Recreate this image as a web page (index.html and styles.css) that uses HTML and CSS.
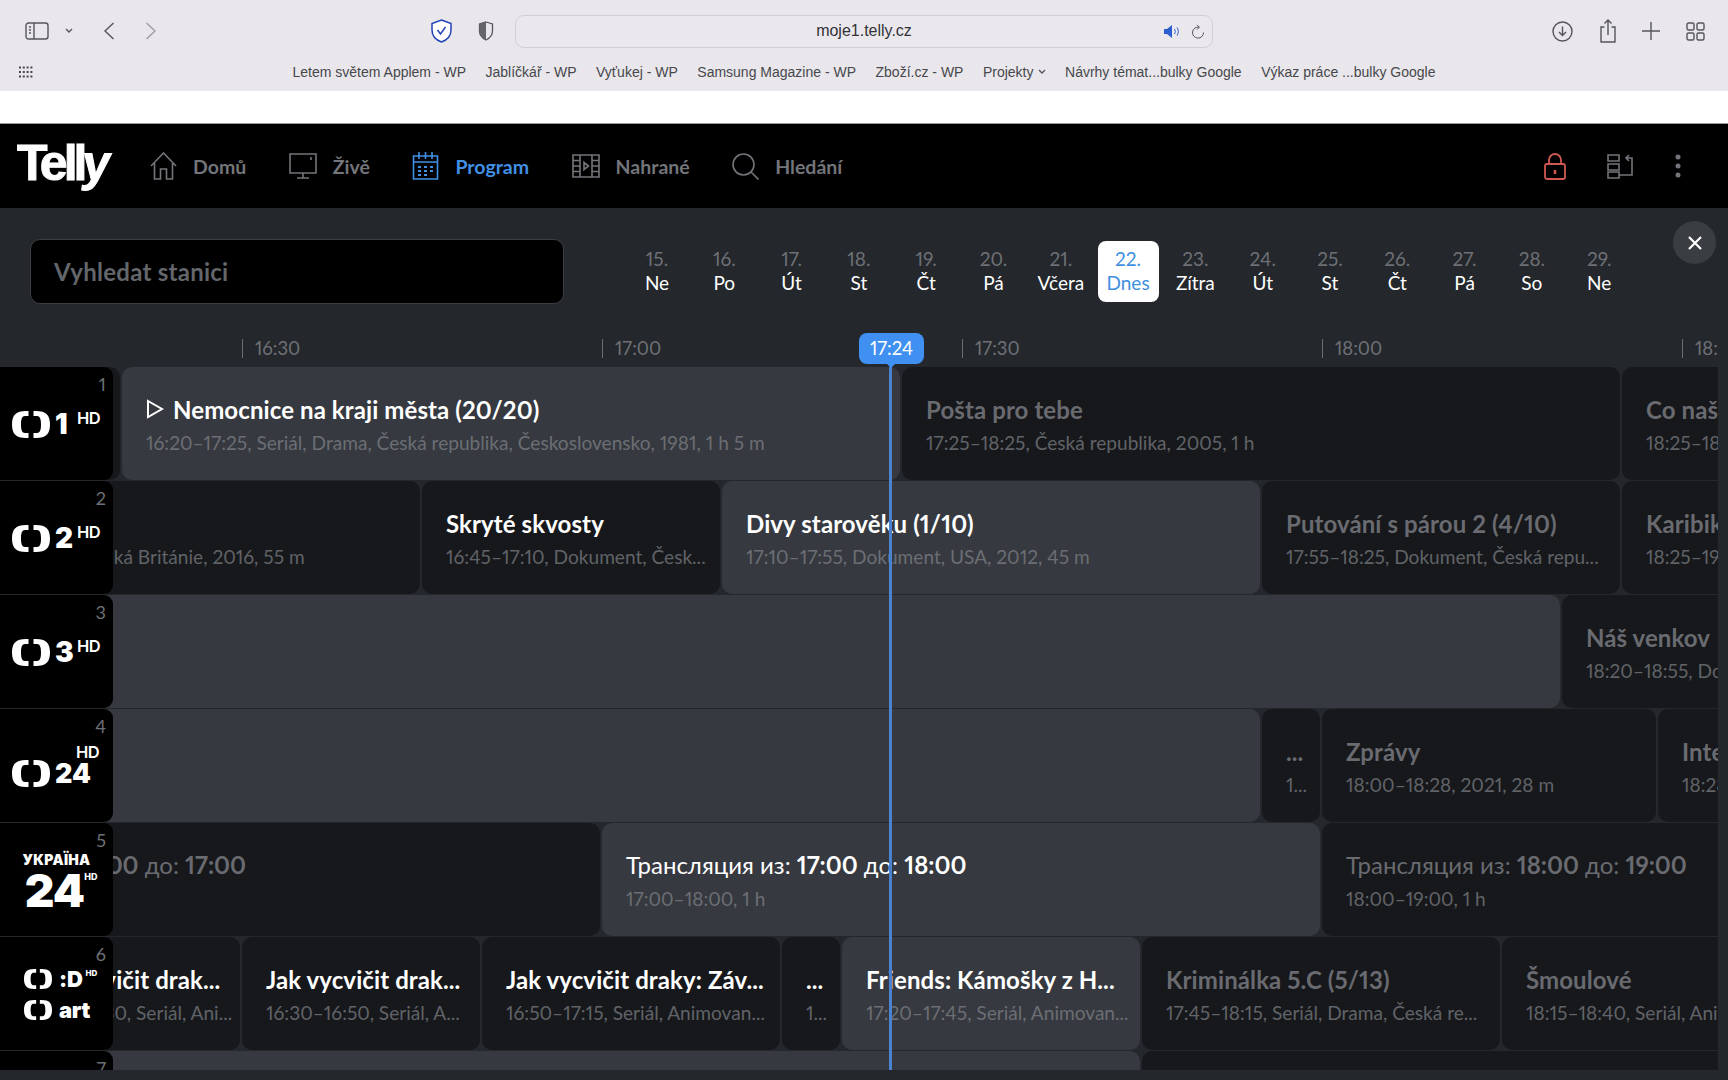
FILE: index.html
```html
<!DOCTYPE html>
<html lang="cs">
<head>
<meta charset="utf-8">
<title>Telly</title>
<link rel="stylesheet" href="styles.css">
</head>
<body>
<svg class="defs" aria-hidden="true">
  <symbol id="ct" viewBox="0 0 38 27">
    <path d="M14 0C4 0 0 4 0 13.500S4 27 14 27h2.500v-5H13c-3 0-4-3-4-8.500S10 5 13 5h3.500V0zM24 0c10 0 14 4 14 13.500S34 27 24 27h-2.500v-5H25c3 0 4-3 4-8.500S28 5 25 5h-3.500V0z" fill="#fff"/>
  </symbol>
</svg>

<header class="browser">
  <div class="browser-top">
    <div class="browser-left">
      <svg class="ic" width="24" height="18" viewBox="0 0 24 18"><rect x="1" y="1" width="22" height="16" rx="2.500"/><path d="M9 1v16M4 5h2M4 8h2M4 11h2"/></svg>
      <svg class="ic chev" width="8" height="6" viewBox="0 0 8 6"><path d="M1 1l3 3 3-3"/></svg>
      <svg class="ic back" width="12" height="18" viewBox="0 0 12 18"><path d="M10.500 1L2 9l8.500 8"/></svg>
      <svg class="ic fwd" width="12" height="18" viewBox="0 0 12 18"><path d="M1.500 1L10 9l-8.500 8"/></svg>
      <span class="grow"></span>
      <svg class="ic-blue" width="23" height="24" viewBox="0 0 23 24"><path d="M11.500 1l9.500 3.500v6.500c0 6-4 10-9.500 12C6 21 2 17 2 11V4.500z" fill="#fff"/><path d="M7.500 11l3 4 5-7" fill="none"/></svg>
      <svg class="half" width="16" height="20" viewBox="0 0 16 20"><path d="M8 1l6.500 2v7c0 4-2.500 7-6.500 9-4-2-6.500-5-6.500-9V3z" fill="none" stroke="#55555a" stroke-width="1.300"/><path d="M8 1L1.500 3v7c0 4 2.500 7 6.500 9z" fill="#65656a"/></svg>
    </div>
    <div class="address">
      <span class="url">moje1.telly.cz</span>
      <svg class="sound" width="17" height="13" viewBox="0 0 17 13"><path d="M0 4h3l5-4v13l-5-4H0z" fill="#2b5fd0"/><path d="M10.500 4c1 1.500 1 3.500 0 5M13 2.500c1.800 2.500 1.800 5.500 0 8" fill="none" stroke="#2b5fd0" stroke-width="1"/></svg>
      <svg class="ic reload" width="14" height="15" viewBox="0 0 14 15"><path d="M8 3.200A5.500 5.500 0 1 0 12.500 8.500M6 .8l2.400 2.400L6 5.600" stroke-width="1"/></svg>
    </div>
    <div class="browser-right">
      <svg class="ic" width="21" height="21" viewBox="0 0 21 21"><circle cx="10.500" cy="10.500" r="9.500"/><path d="M10.500 5.500v9M7 11l3.500 3.500L14 11"/></svg>
      <svg class="ic" width="18" height="24" viewBox="0 0 18 24"><path d="M5.500 8H2v15h14V8h-3.500M9 16V1M5.500 4.500L9 1l3.500 3.500"/></svg>
      <svg class="ic" width="18" height="18" viewBox="0 0 18 18"><path d="M9 0v18M0 9h18"/></svg>
      <svg class="ic" width="19" height="19" viewBox="0 0 19 19"><rect x="1" y="1" width="7" height="7" rx="1.500"/><rect x="11" y="1" width="7" height="7" rx="1.500"/><rect x="1" y="11" width="7" height="7" rx="1.500"/><rect x="11" y="11" width="7" height="7" rx="1.500"/></svg>
    </div>
  </div>
  <div class="browser-bookmarks">
    <svg class="apps" width="16" height="12" viewBox="0 0 16 12"><path d="M1 1.500h14M1 6h14M1 10.500h14" stroke="#46464a" stroke-width="2" stroke-dasharray="2 1.800" fill="none"/></svg>
    <nav class="bookmarks">
      <span>Letem světem Applem - WP</span>
      <span>Jablíčkář - WP</span>
      <span>Vyťukej - WP</span>
      <span>Samsung Magazine - WP</span>
      <span>Zboží.cz - WP</span>
      <span class="folder">Projekty <svg class="ic" width="8" height="6" viewBox="0 0 8 6"><path d="M1 1l3 3 3-3"/></svg></span>
      <span>Návrhy témat...bulky Google</span>
      <span>Výkaz práce ...bulky Google</span>
    </nav>
  </div>
</header>
<div class="page-gap"></div>

<nav class="topnav">
  <div class="logo">Tell<span class="logo-y">y</span></div>
  <a class="nav-item">
    <svg class="nav-ic" width="27" height="28" viewBox="0 0 27 28"><path d="M1 14L13.500 1 26 14M4.500 11v16H10.500V17h6v10h6V11"/></svg>
    <span>Domů</span>
  </a>
  <a class="nav-item">
    <svg class="nav-ic" width="28" height="26" viewBox="0 0 28 26"><path d="M1 1h26v19H1zM14 20v5M8 25h12M22 4v3"/></svg>
    <span>Živě</span>
  </a>
  <a class="nav-item nav-item--active">
    <svg class="nav-ic" width="27" height="28" viewBox="0 0 27 28"><path d="M1.500 4h24v23h-24zM1.500 10h24M7 0v7M13.500 0v7M20 0v7"/><path class="nav-dots" d="M6 15h3M12 15h3M18 15h3M6 19h3M12 19h3M18 19h3M6 23h3M12 23h3"/></svg>
    <span>Program</span>
  </a>
  <a class="nav-item">
    <svg class="nav-ic" width="28" height="24" viewBox="0 0 28 24"><path d="M1 1h26v22H1zM8 1v22M20 1v22M1 6.500h7M1 12h7M1 17.500h7M20 6.500h7M20 12h7M20 17.500h7M12 8.500l4.500 3.500-4.500 3.500z"/></svg>
    <span>Nahrané</span>
  </a>
  <a class="nav-item">
    <svg class="nav-ic" width="27" height="27" viewBox="0 0 27 27"><circle cx="11.500" cy="11.500" r="10.500"/><path d="M19 19l7.500 7.500"/></svg>
    <span>Hledání</span>
  </a>
  <span class="grow"></span>
  <svg class="nav-lock" width="22" height="27" viewBox="0 0 22 27"><path d="M5 11V7a6 6 0 0 1 12 0v4M3 11h16a2 2 0 0 1 2 2v11a2 2 0 0 1-2 2H3a2 2 0 0 1-2-2V13a2 2 0 0 1 2-2z"/><path d="M11 17v4" stroke-width="2.500"/></svg>
  <svg class="nav-ic nav-devices" width="27" height="25" viewBox="0 0 27 25"><path d="M1 1h11v6H1zM1 10h11v6H1zM1 18h11v6H1zM12 21h13V4h-5M22 1l-3 3 3 3"/></svg>
  <svg class="nav-more" width="6" height="24" viewBox="0 0 6 24"><circle cx="3" cy="3" r="2.500"/><circle cx="3" cy="12" r="2.500"/><circle cx="3" cy="21" r="2.500"/></svg>
</nav>

<main class="epg">
  <section class="filters">
    <div class="search">Vyhledat stanici</div>
    <div class="dates">
      <div class="date"><b>15.</b><span>Ne</span></div>
      <div class="date"><b>16.</b><span>Po</span></div>
      <div class="date"><b>17.</b><span>Út</span></div>
      <div class="date"><b>18.</b><span>St</span></div>
      <div class="date"><b>19.</b><span>Čt</span></div>
      <div class="date"><b>20.</b><span>Pá</span></div>
      <div class="date"><b>21.</b><span>Včera</span></div>
      <div class="date date--active"><b>22.</b><span>Dnes</span></div>
      <div class="date"><b>23.</b><span>Zítra</span></div>
      <div class="date"><b>24.</b><span>Út</span></div>
      <div class="date"><b>25.</b><span>St</span></div>
      <div class="date"><b>26.</b><span>Čt</span></div>
      <div class="date"><b>27.</b><span>Pá</span></div>
      <div class="date"><b>28.</b><span>So</span></div>
      <div class="date"><b>29.</b><span>Ne</span></div>
    </div>
    <button class="close" aria-label="Zavřít"><svg width="16" height="16" viewBox="0 0 16 16"><path d="M2 2l12 12M14 2L2 14"/></svg></button>
  </section>

  <section class="guide">
    <div class="ruler">
      <span class="tick">16:30</span>
      <span class="tick">17:00</span>
      <span class="tick">17:30</span>
      <span class="tick">18:00</span>
      <span class="tick">18:30</span>
    </div>
    <div class="now-badge">17:24</div>
    <div class="now-line"></div>

    <div class="grid">
      <div class="channels">
        <div class="channel"><i>1</i><div class="ch-logo"><svg class="ct"><use href="#ct"/></svg><b class="ch-num">1</b><small class="ch-hd">HD</small></div></div>
        <div class="channel"><i>2</i><div class="ch-logo"><svg class="ct"><use href="#ct"/></svg><b class="ch-num">2</b><small class="ch-hd">HD</small></div></div>
        <div class="channel"><i>3</i><div class="ch-logo"><svg class="ct"><use href="#ct"/></svg><b class="ch-num">3</b><small class="ch-hd">HD</small></div></div>
        <div class="channel"><i>4</i><div class="ch-logo ch-logo--24"><svg class="ct"><use href="#ct"/></svg><b class="ch-num">24</b><small class="ch-hd">HD</small></div></div>
        <div class="channel"><i>5</i><div class="ch-ua"><span class="ua-name">УКРАЇНА</span><span class="ua-num">24<small>HD</small></span></div></div>
        <div class="channel"><i>6</i><div class="ch-stack">
          <div class="ch-line"><svg class="ct ct--small"><use href="#ct"/></svg><b>:D</b><small>HD</small></div>
          <div class="ch-line"><svg class="ct ct--small"><use href="#ct"/></svg><b>art</b></div>
        </div></div>
        <div class="channel"><i>7</i></div>
      </div>

      <div class="rows">
        <div class="row">
          <div class="prog" style="width:718px"></div>
          <div class="prog prog--live" style="width:778px"><div class="prog-title"><svg class="play" width="18" height="20" viewBox="0 0 18 20"><path d="M2 2l14 8-14 8z"/></svg>Nemocnice na kraji města (20/20)</div><div class="prog-meta">16:20–17:25, Seriál, Drama, Česká republika, Československo, 1981, 1 h 5 m</div></div>
          <div class="prog" style="width:718px"><div class="prog-title">Pošta pro tebe</div><div class="prog-meta">17:25–18:25, Česká republika, 2005, 1 h</div></div>
          <div class="prog" style="width:538px"><div class="prog-title">Co naše babička</div><div class="prog-meta">18:25–18:55, Dokument, 30 m</div></div>
        </div>
        <div class="row">
          <div class="prog" style="width:358px"></div>
          <div class="prog" style="width:658px"><div class="prog-title">&nbsp;</div><div class="prog-meta">15:50–16:45, Dokument, Historický, Velká Británie, 2016, 55 m</div></div>
          <div class="prog prog--past" style="width:298px"><div class="prog-title">Skryté skvosty</div><div class="prog-meta">16:45–17:10, Dokument, Česk...</div></div>
          <div class="prog prog--live" style="width:538px"><div class="prog-title">Divy starověku (1/10)</div><div class="prog-meta">17:10–17:55, Dokument, USA, 2012, 45 m</div></div>
          <div class="prog" style="width:358px"><div class="prog-title">Putování s párou 2 (4/10)</div><div class="prog-meta">17:55–18:25, Dokument, Česká repu...</div></div>
          <div class="prog" style="width:418px"><div class="prog-title">Karibik</div><div class="prog-meta">18:25–19:00, Dokument</div></div>
        </div>
        <div class="row">
          <div class="prog prog--live" style="width:2158px"></div>
          <div class="prog" style="width:418px"><div class="prog-title">Náš venkov</div><div class="prog-meta">18:20–18:55, Dokument, Česko</div></div>
        </div>
        <div class="row">
          <div class="prog prog--live" style="width:1858px"></div>
          <div class="prog" style="width:58px"><div class="prog-title">...</div><div class="prog-meta">1...</div></div>
          <div class="prog" style="width:334px"><div class="prog-title">Zprávy</div><div class="prog-meta">18:00–18:28, 2021, 28 m</div></div>
          <div class="prog" style="width:418px"><div class="prog-title">Interview</div><div class="prog-meta">18:28–19:00, 2021</div></div>
        </div>
        <div class="row">
          <div class="prog" style="width:478px"></div>
          <div class="prog" style="width:718px"><div class="prog-title prog-title--plain">Трансляция из: <b>16:00</b> до: <b>17:00</b></div><div class="prog-meta">&nbsp;</div></div>
          <div class="prog prog--live" style="width:718px"><div class="prog-title prog-title--plain">Трансляция из: <b>17:00</b> до: <b>18:00</b></div><div class="prog-meta">17:00–18:00, 1 h</div></div>
          <div class="prog" style="width:718px"><div class="prog-title prog-title--plain">Трансляция из: <b>18:00</b> до: <b>19:00</b></div><div class="prog-meta">18:00–19:00, 1 h</div></div>
        </div>
        <div class="row">
          <div class="prog" style="width:598px"></div>
          <div class="prog prog--past" style="width:238px"><div class="prog-title">Jak vycvičit drak...</div><div class="prog-meta">16:10–16:30, Seriál, Ani...</div></div>
          <div class="prog prog--past" style="width:238px"><div class="prog-title">Jak vycvičit drak...</div><div class="prog-meta">16:30–16:50, Seriál, A...</div></div>
          <div class="prog prog--past" style="width:298px"><div class="prog-title">Jak vycvičit draky: Záv...</div><div class="prog-meta">16:50–17:15, Seriál, Animovan...</div></div>
          <div class="prog prog--past" style="width:58px"><div class="prog-title">...</div><div class="prog-meta">1...</div></div>
          <div class="prog prog--live" style="width:298px"><div class="prog-title">Friends: Kámošky z H...</div><div class="prog-meta">17:20–17:45, Seriál, Animovan...</div></div>
          <div class="prog" style="width:358px"><div class="prog-title">Kriminálka 5.C (5/13)</div><div class="prog-meta">17:45–18:15, Seriál, Drama, Česká re...</div></div>
          <div class="prog" style="width:298px"><div class="prog-title">Šmoulové</div><div class="prog-meta">18:15–18:40, Seriál, Animovaný</div></div>
        </div>
        <div class="row">
          <div class="prog prog--live" style="width:1738px"></div>
          <div class="prog" style="width:718px"></div>
        </div>
      </div>
    </div>
  </section>
</main>
</body>
</html>
```

FILE: styles.css
```css
* { box-sizing: border-box; }
html, body { margin: 0; height: 1080px; overflow: hidden; }
body { background: #24272c; font-family: "Lato", "Noto Sans", sans-serif; font-variant-numeric: proportional-nums; color: #fff; }
.defs { display: none; }
.grow { flex: 1; }

/* browser chrome */
.browser { height: 91px; background: #e9e7ec; font-family: "Liberation Sans", sans-serif; color: #47474b; }
.browser-top { height: 62px; display: grid; grid-template-columns: 515px 698px 1fr; align-items: center; }
.browser-left { display: flex; align-items: center; padding-left: 25px; padding-right: 21px; }
.browser-right { display: flex; align-items: center; padding-left: 339px; gap: 25.500px; }
.ic { fill: none; stroke: #55555a; stroke-width: 1.4; flex: none; display: block; }
.chev { margin-left: 16px; }
.back { margin-left: 30px; }
.fwd { margin-left: 30px; opacity: .5; }
.ic-blue { stroke: #2344b8; stroke-width: 1.5; fill: none; display: block; }
.half { margin-left: 25px; display: block; }
.address { height: 33px; border: 1.5px solid #d2d0d6; border-radius: 9px; background: #eae8ed; display: flex; align-items: center; justify-content: center; position: relative; }
.url { font-size: 16px; color: #333337; }
.sound { position: absolute; right: 31px; top: 9px; }
.reload { position: absolute; right: 7px; top: 8px; }
.browser-bookmarks { height: 21px; margin-top: -1px; display: grid; grid-template-columns: 1fr auto 1fr; align-items: center; padding-left: 18px; padding-right: 18px; }
.apps { display: block; }
.bookmarks { display: flex; gap: 19.500px; font-size: 14px; white-space: nowrap; grid-column: 2; }
.folder { display: inline-flex; align-items: center; gap: 4px; }
.page-gap { height: 33px; background: #fff; border-bottom: 1px solid #9a9a9d; }

/* top navigation */
.topnav { height: 84px; background: #000; display: flex; align-items: center; padding-left: 17px; padding-right: 47px; }
.logo { font-family: "Liberation Sans", sans-serif; font-weight: 700; font-size: 50px; letter-spacing: -4px; width: 133px; color: #fff; line-height: 1; margin-top: -6px; -webkit-text-stroke: 1px #fff; }
.logo-y { display: inline-block; transform: skewX(-8deg); }
.nav-item { display: flex; align-items: center; gap: 16px; margin-right: 42.500px; font-size: 19.500px; font-weight: 700; color: #73757a; }
.nav-item--active { color: #4091e6; }
.nav-ic { fill: none; stroke: #73757a; stroke-width: 1.6; display: block; flex: none; }
.nav-item--active .nav-ic { stroke: #4091e6; }
.nav-dots { stroke-width: 2; }
.nav-lock { fill: none; stroke: #cf5751; stroke-width: 1.8; display: block; }
.nav-devices { margin-left: 41px; }
.nav-more { fill: #73757a; margin-left: 41px; display: block; }

/* filters */
.epg { height: 871px; }
.filters { height: 125px; display: flex; align-items: flex-start; padding-left: 30px; position: relative; }
.search { width: 534px; height: 65px; margin-top: 31px; background: #000; border: 1px solid #3b3e43; border-radius: 10px; padding-left: 23px; display: flex; align-items: center; font-size: 24px; letter-spacing: .25px; font-weight: 700; color: #63666b; }
.dates { display: flex; gap: 6.300px; margin-left: 62.500px; margin-top: 33px; }
.date { width: 61px; height: 61px; padding-bottom: 2px; border-radius: 8px; display: flex; flex-direction: column; align-items: center; justify-content: center; font-size: 19px; line-height: 24px; }
.date b { font-weight: 400; color: #6d7075; }
.date--active { background: #fff; }
.date--active b, .date--active span { color: #3f8fe0; }
.close { position: absolute; left: 1673px; top: 13px; width: 43px; height: 43px; border-radius: 50%; border: 0; padding: 0; background: #3a3d42; display: flex; align-items: center; justify-content: center; }
.close svg { stroke: #fff; stroke-width: 2.200; fill: none; display: block; }

/* guide */
.guide { position: relative; width: 1718px; }
.ruler { height: 34px; padding-left: 242px; display: flex; overflow: hidden; }
.tick { flex: none; width: 360px; height: 19px; margin-top: 6px; padding-left: 12px; border-left: 1px solid #6b6e73; font-size: 18.500px; line-height: 19px; color: #6d7075; }
.now-badge { position: absolute; left: 859px; top: 0; z-index: 5; width: 65px; height: 31px; border-radius: 8px; background: #3f90f0; color: #fff; font-size: 18.500px; line-height: 31px; text-align: center; }
.now-badge::after { content: ""; position: absolute; left: 27px; top: 30px; border: 5px solid transparent; border-top-color: #3f90f0; border-bottom: 0; }
.now-line { position: absolute; left: 889px; top: 34px; width: 3px; height: 703px; background: #4a82d0; z-index: 4; }

.grid { display: flex; height: 703px; overflow: hidden; }
.channels { width: 113px; flex: none; display: flex; flex-direction: column; gap: 1.500px; position: relative; z-index: 2; }
.channel { position: relative; height: 112.500px; flex: none; background: #000; border-radius: 0 9px 9px 0; display: flex; align-items: center; justify-content: center; }
.channel i { position: absolute; right: 7px; top: 6px; font-style: normal; font-size: 18px; line-height: 22px; color: #6d7075; }
.rows { flex: 1; min-width: 0; margin-left: -12px; display: flex; flex-direction: column; gap: 1.500px; overflow: hidden; }
.row { height: 112.500px; flex: none; display: flex; gap: 2px; margin-left: -699px; }
.prog { flex: none; height: 112.500px; background: #17181b; border-radius: 10px; padding: 27px 0 0 24px; overflow: hidden; white-space: nowrap; }
.prog--live { background: #36393f; }
.prog-title { display: flex; align-items: center; height: 30px; font-size: 24px; letter-spacing: .1px; font-weight: 700; color: #696b71; white-space: pre; }
.prog-title--plain { display: block; font-weight: 400; line-height: 30px; letter-spacing: 0; }
.prog-title--plain b { font-weight: 700; }
.prog--live .prog-title, .prog--past .prog-title { color: #fff; }
.prog-meta { margin-top: 7px; font-size: 19.100px; line-height: 24px; color: #606368; }
.prog--live .prog-meta { color: #6b6e74; }
.play { fill: none; stroke: #fff; stroke-width: 2; margin-right: 9px; flex: none; }

/* channel logos */
.ch-logo { width: 100%; padding-left: 12px; margin-top: 3px; display: flex; align-items: center; }
.ct { width: 38px; height: 27px; flex: none; display: block; }
.ch-num { margin-left: 5px; width: 22px; font-family: "Inter", sans-serif; font-size: 28px; font-weight: 900; line-height: 27px; }
.ch-hd { margin-top: -14px; font-family: "Inter", sans-serif; font-size: 16.500px; font-weight: 600; line-height: 16px; letter-spacing: -.5px; }
.ch-logo--24 { position: relative; margin-top: 16px; }
.ch-logo--24 .ch-num { width: 38px; font-size: 27px; letter-spacing: 0; }
.ch-logo--24 .ch-hd { position: absolute; left: 76px; top: -16px; margin: 0; }
.ch-ua { display: flex; flex-direction: column; align-items: center; margin-top: 8px; padding-right: 0; }
.ua-name { font-family: "Inter", sans-serif; font-size: 14px; font-weight: 900; line-height: 14px; letter-spacing: .3px; }
.ua-num { position: relative; font-family: "Inter", sans-serif; font-size: 46px; font-weight: 900; line-height: 46px; letter-spacing: -1px; margin-right: 4px; }
.ua-num small { position: absolute; left: 100%; top: 5px; font-size: 9px; line-height: 10px; font-weight: 800; letter-spacing: 0; }
.ch-stack { width: 100%; padding-left: 24px; margin-top: 2px; display: flex; flex-direction: column; gap: 11px; }
.ch-line { display: flex; align-items: center; font-family: "Inter", sans-serif; font-size: 22px; font-weight: 800; line-height: 20px; letter-spacing: -.3px; }
.ch-line small { font-size: 8px; line-height: 10px; margin: -12px 0 0 3px; letter-spacing: 0; }
.ct--small { width: 28px; height: 20px; margin-right: 7px; }
```
